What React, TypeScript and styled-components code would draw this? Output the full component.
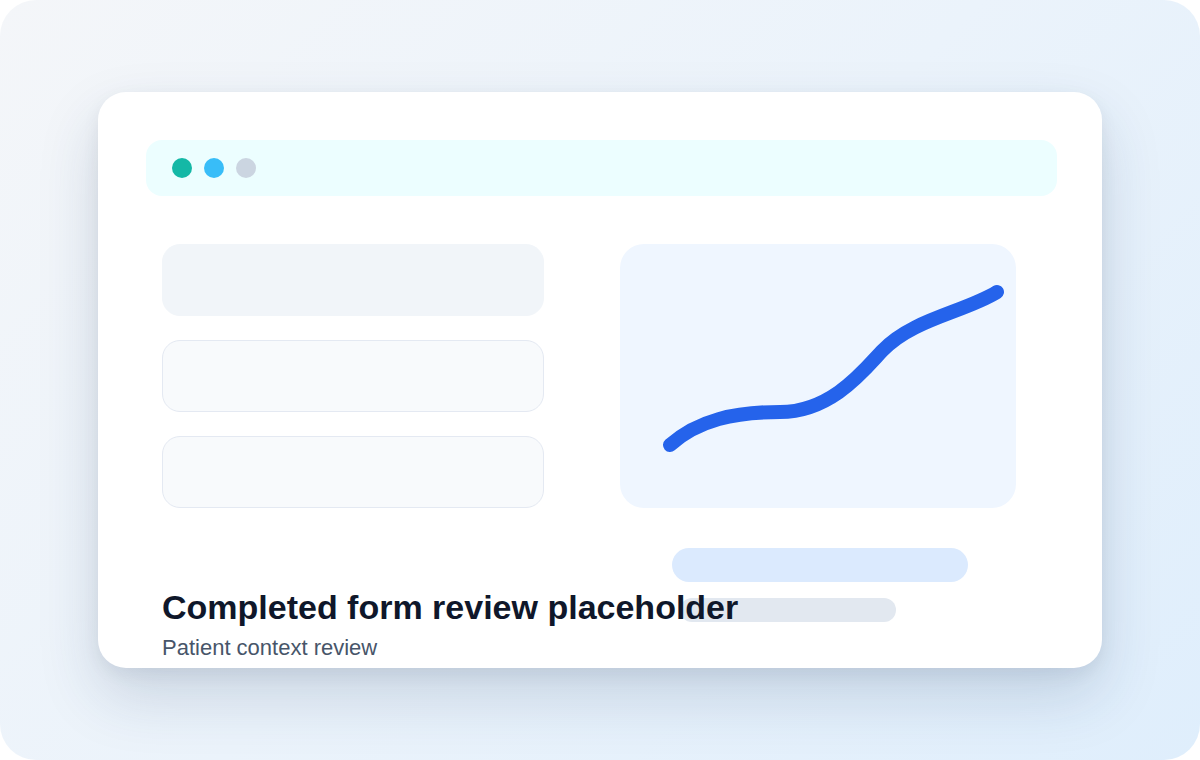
import React from 'react';
import styled, { createGlobalStyle } from 'styled-components';

const GlobalStyle = createGlobalStyle`
    html,
    body {
        margin: 0;
        padding: 0;
        background: #ffffff;
    }

    body {
        font-family: 'Liberation Sans', Arial, sans-serif;
    }
`;

const Page = styled.div`
    width: 1200px;
    height: 760px;
    border-radius: 36px;
    overflow: hidden;
    display: flex;
    align-items: center;
    justify-content: center;
    background: linear-gradient(135deg, #f4f6f9 0%, #ebf3fb 50%, #dfeefc 100%);
`;

const Card = styled.div`
    width: 1004px;
    height: 576px;
    box-sizing: border-box;
    padding: 48px 45px 48px 48px;
    border-radius: 28px;
    overflow: hidden;
    background: #ffffff;
    box-shadow: 0 28px 60px rgba(30, 58, 100, 0.17),
        0 6px 18px rgba(15, 23, 42, 0.06);
`;

const TopBar = styled.div`
    height: 56px;
    border-radius: 16px;
    background: #ecfeff;
    display: flex;
    align-items: center;
    gap: 12px;
    padding: 0 26px;
`;

const Dot = styled.span<{ color: string }>`
    width: 20px;
    height: 20px;
    border-radius: 50%;
    background: ${props => props.color};
`;

const Content = styled.div`
    display: grid;
    grid-template-columns: 382px 396px;
    column-gap: 76px;
    margin-top: 48px;
    padding-left: 16px;
`;

const LeftColumn = styled.div`
    display: flex;
    flex-direction: column;
    position: relative;
    z-index: 1;
`;

const FieldList = styled.div`
    display: flex;
    flex-direction: column;
    gap: 24px;
`;

const Field = styled.div<{ filled?: boolean }>`
    height: 72px;
    box-sizing: border-box;
    border-radius: 18px;
    background: ${props => (props.filled ? '#f1f5f9' : '#f8fafc')};
    border: 1px solid ${props => (props.filled ? '#f1f5f9' : '#e4e9f2')};
`;

const Caption = styled.div`
    margin-top: 80px;
    white-space: nowrap;
`;

const Title = styled.h1`
    margin: 0;
    font-size: 34px;
    line-height: 1.15;
    font-weight: 700;
    color: #0f172a;
`;

const Subtitle = styled.p`
    margin: 7px 0 0;
    font-size: 22px;
    line-height: 1.3;
    color: #475569;
`;

const RightColumn = styled.div`
    display: flex;
    flex-direction: column;
`;

const ChartPanel = styled.div`
    height: 264px;
    border-radius: 24px;
    background: #eff6ff;
    overflow: hidden;

    svg {
        display: block;
        width: 100%;
        height: 100%;
    }
`;

const Bar = styled.div<{ width: number; height: number; indent: number; color: string; gapTop: number }>`
    width: ${props => props.width}px;
    height: ${props => props.height}px;
    margin-top: ${props => props.gapTop}px;
    margin-left: ${props => props.indent}px;
    border-radius: 999px;
    background: ${props => props.color};
`;

// hand-fitted to the sketch: quick lift, flat middle, steep rise, gentle finish
const trendPath = [
    'M50 201',
    'C 78 176, 115 168, 160 168',
    'C 212 168, 245 125, 262 107',
    'C 292 75, 345 68, 377 48',
].join(' ');

const TrendLine: React.FC = () => (
    <svg viewBox='0 0 396 264'>
        <path
            d={trendPath}
            fill='none'
            stroke='#2563eb'
            strokeWidth={14}
            strokeLinecap='round'
            strokeLinejoin='round'
        />
    </svg>
);

const App: React.FC = () => {
    return (
        <>
            <GlobalStyle />
            <Page>
                <Card>
                    <TopBar>
                        <Dot color='#14b8a6' />
                        <Dot color='#38bdf8' />
                        <Dot color='#cbd5e1' />
                    </TopBar>
                    <Content>
                        <LeftColumn>
                            <FieldList>
                                <Field filled />
                                <Field />
                                <Field />
                            </FieldList>
                            <Caption>
                                <Title>Completed form review placeholder</Title>
                                <Subtitle>Patient context review</Subtitle>
                            </Caption>
                        </LeftColumn>
                        <RightColumn>
                            <ChartPanel>
                                <TrendLine />
                            </ChartPanel>
                            <Bar width={296} height={34} indent={52} gapTop={40} color='#dbeafe' />
                            <Bar width={216} height={24} indent={60} gapTop={16} color='#e2e8f0' />
                        </RightColumn>
                    </Content>
                </Card>
            </Page>
        </>
    );
};

export default App;
